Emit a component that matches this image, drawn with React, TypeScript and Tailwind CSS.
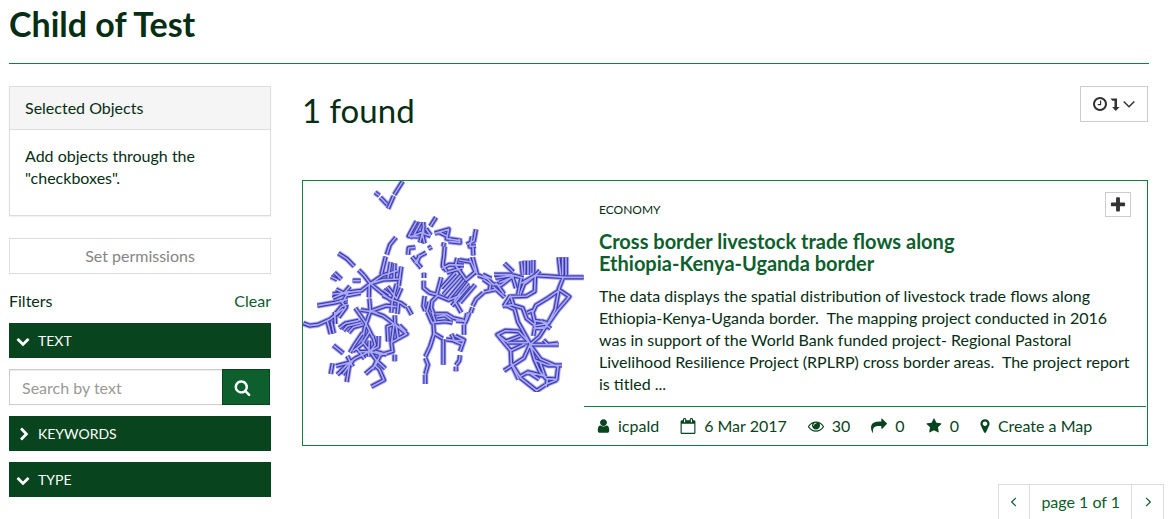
import React from "react";

const icons = {
  user: "M1536 1399q0 109-62.5 187t-150.5 78h-854q-88 0-150.5-78t-62.5-187q0-85 8.5-160.5t31.5-152 58.5-131 94-89 134.5-34.5q131 128 313 128t313-128q76 0 134.5 34.5t94 89 58.5 131 31.5 152 8.5 160.5zm-256-887q0 159-112.5 271.5t-271.5 112.5-271.5-112.5-112.5-271.5 112.5-271.5 271.5-112.5 271.5 112.5 112.5 271.5z",
  calendar:
    "M192 1664h1408v-1024h-1408v1024zm384-1216v-288q0-14-9-23t-23-9h-64q-14 0-23 9t-9 23v288q0 14 9 23t23 9h64q14 0 23-9t9-23zm768 0v-288q0-14-9-23t-23-9h-64q-14 0-23 9t-9 23v288q0 14 9 23t23 9h64q14 0 23-9t9-23zm384-64v1280q0 52-38 90t-90 38h-1408q-52 0-90-38t-38-90v-1280q0-52 38-90t90-38h128v-96q0-66 47-113t113-47h64q66 0 113 47t47 113v96h384v-96q0-66 47-113t113-47h64q66 0 113 47t47 113v96h128q52 0 90 38t38 90z",
  eye: "M1664 960q-152-236-381-353 61 104 61 225 0 185-131.5 316.5t-316.5 131.5-316.5-131.5-131.5-316.5q0-121 61-225-229 117-381 353 133 205 333.5 326.5t434.5 121.5 434.5-121.5 333.5-326.5zm-720-384q0-20-14-34t-34-14q-125 0-214.5 89.5t-89.5 214.5q0 20 14 34t34 14 34-14 14-34q0-86 61-147t147-61q20 0 34-14t14-34zm848 384q0 34-20 69-140 230-376.5 368.5t-499.5 138.5-499.5-139-376.5-368q-20-35-20-69t20-69q140-229 376.5-368t499.5-139 499.5 139 376.5 368q20 35 20 69z",
  share:
    "M1792 640q0 26-19 45l-512 512q-19 19-45 19t-45-19-19-45v-256h-224q-98 0-175.5 6t-154 21.5-133 42.5-105.5 69.5-80 101-48.5 138.5-17.5 181q0 55 5 123 0 6 2.5 23.5t2.5 26.5q0 15-8.5 25t-23.5 10q-16 0-28-17-7-9-13-22t-13.5-30-10.5-24q-127-285-127-451 0-199 53-333 162-403 875-403h224v-256q0-26 19-45t45-19 45 19l512 512q19 19 19 45z",
  star: "M1728 647q0 22-26 48l-363 354 86 500q1 7 1 20 0 21-10.5 35.5t-30.5 14.5q-19 0-40-12l-449-236-449 236q-22 12-40 12-21 0-31.5-14.5t-10.5-35.5q0-6 2-20l86-500-364-354q-25-27-25-48 0-37 56-46l502-73 225-455q19-41 49-41t49 41l225 455 502 73q56 9 56 46z",
  marker:
    "M1152 640q0-106-75-181t-181-75-181 75-75 181 75 181 181 75 181-75 75-181zm256 0q0 109-33 179l-364 774q-16 33-47.5 52t-67.5 19-67.5-19-46.5-52l-365-774q-33-70-33-179 0-212 150-362t362-150 362 150 150 362z",
  clock:
    "M1024 544v448q0 14-9 23t-23 9h-320q-14 0-23-9t-9-23v-64q0-14 9-23t23-9h224v-352q0-14 9-23t23-9h64q14 0 23 9t9 23zm416 352q0-148-73-273t-198-198-273-73-273 73-198 198-73 273 73 273 198 198 273 73 273-73 198-198 73-273zm224 0q0 209-103 385.5t-279.5 279.5-385.5 103-385.5-103-279.5-279.5-103-385.5 103-385.5 279.5-279.5 385.5-103 385.5 103 279.5 279.5 103 385.5z",
  plus: "M1600 736v192q0 40-28 68t-68 28h-416v416q0 40-28 68t-68 28h-192q-40 0-68-28t-28-68v-416h-416q-40 0-68-28t-28-68v-192q0-40 28-68t68-28h416v-416q0-40 28-68t68-28h192q40 0 68 28t28 68v416h416q40 0 68 28t28 68z",
  search:
    "M1216 832q0-185-131.5-316.5t-316.5-131.5-316.5 131.5-131.5 316.5 131.5 316.5 316.5 131.5 316.5-131.5 131.5-316.5zm512 832q0 52-38 90t-90 38q-54 0-90-38l-343-342q-179 124-399 124-143 0-273.5-55.5t-225-150-150-225-55.5-273.5 55.5-273.5 150-225 225-150 273.5-55.5 273.5 55.5 225 150 150 225 55.500 273.500q0 220-124 399l343 343q37 37 37 90z",
  chevron:
    "M1683 808l-742 741q-19 19-45 19t-45-19l-742-741q-19-19-19-45.5t19-45.5l166-165q19-19 45-19t45 19l531 531 531-531q19-19 45-19t45 19l166 165q19 19 19 45.5t-19 45.5z",
  angle:
    "M1395 736q0 13-10 23l-466 466q-10 10-23 10t-23-10l-466-466q-10-10-10-23t10-23l50-50q10-10 23-10t23 10l393 393 393-393q10-10 23-10t23 10l50 50q10 10 10 23z",
};

function Icon({
  name,
  className = "size-4",
  viewBox = "0 0 1792 1792",
}: {
  name: keyof typeof icons;
  className?: string;
  viewBox?: string;
}) {
  return (
    <svg viewBox={viewBox} fill="currentColor" aria-hidden="true" className={`shrink-0 ${className}`}>
      <path d={icons[name]} />
    </svg>
  );
}

const routes = [
  // north west spur
  "M308 10L283 50", "M281 54L264 92", "M225 43L238 53", "M241 58L262 80",
  // western cluster
  "M288 178L270 200L260 230", "M257 236L244 290", "M115 226L140 242L163 265", "M176 276L192 292",
  "M93 296L112 305", "M103 284L124 304", "M158 308H182", "M192 292L211 317L184 338L143 343",
  "M211 317L248 292L292 278", "M211 317L250 305L302 303", "M272 252L264 300", "M284 256L282 304", "M304 266L296 324",
  "M211 317L272 366", "M208 318L207 358", "M98 348L132 345L150 325", "M108 334L144 352L182 345", "M98 360L148 340",
  "M144 344L126 376", "M52 383L105 374L142 364", "M144 378L124 386L106 408", "M120 366L138 388L116 418",
  "M10 436L30 443L54 440L90 424L130 392", "M82 430L92 468", "M94 430L102 466", "M104 402L106 438",
  "M208 362L211 398", "M166 390L195 432L218 478", "M182 396L232 404", "M211 400L258 383L290 386", "M211 400L250 414L282 438",
  "M211 400L194 450L190 472", "M176 428L136 436L118 450", "M184 434L142 444L130 458", "M188 440L160 448L146 464",
  "M248 352L277 366L274 404", "M290 318L278 366L304 376L318 386", "M262 326L290 362L304 330", "M250 336L268 348",
  "M296 370L292 408", "M322 386L335 410", "M284 412L285 436", "M282 438L262 446L264 490", "M284 438L308 458L320 468L294 482L276 492",
  "M282 440L274 500", "M288 440L294 480", "M298 442L318 462", "M274 494L278 520L244 530L210 520",
  "M284 530L284 550", "M100 502L130 526", "M188 464L164 500L150 524", "M208 462L186 498L158 520", "M218 474L226 500L210 520L175 522",
  "M236 474L235 506L210 520L168 540L148 554", "M208 488L206 536", "M186 488L210 520L230 548L218 574", "M230 548L256 572",
  "M244 524L226 562L196 588", "M222 560L238 574L252 606L214 626", "M98 556L92 588", "M148 554L112 590", "M148 554L108 564",
  "M150 550L140 612", "M158 548L128 590", "M142 534L158 566", "M224 520L260 530", "M170 510L194 542",
  // central cluster
  "M408 118L391 145", "M350 130L326 174L356 176", "M370 132L371 168", "M362 134L342 170", "M330 178L362 164L392 174",
  "M404 166L446 154L440 182L480 188", "M372 142L360 194", "M366 164L374 196", "M378 152L392 172", "M416 162L444 176", "M446 190L480 194L478 182",
  "M346 208L326 210L324 230", "M385 212L395 206", "M378 224L360 234L344 256", "M336 236L364 270", "M358 232L350 258", "M372 284V300", "M371 308V330L388 344L410 350",
  "M528 154L522 188L500 200", "M516 176L510 206L528 204", "M519 208L520 232", "M434 206L432 232L428 262L440 280", "M432 194L430 206",
  "M424 272L448 260L492 262", "M472 240L466 262L492 298", "M478 246L512 252", "M518 238L532 290", "M508 240L526 282L498 306L470 266",
  "M440 284L486 270", "M466 284L424 330", "M482 292L430 350", "M492 306L446 362", "M504 314L462 368", "M526 320L480 374", "M508 322L456 384",
  "M424 298L410 350", "M412 352L446 366L484 350", "M414 352L396 370L394 390L402 410", "M374 354L370 384L376 398",
  "M382 402L396 434L436 430L458 434", "M388 372L380 402", "M406 408H440L460 420L492 428", "M410 416L434 412L454 426", "M396 402L406 430",
  "M462 366L484 404", "M468 428L498 430L508 404", "M502 406L494 438", "M492 440V470", "M400 436L402 466L428 482",
  "M402 468L390 506L376 536", "M376 540L384 560L376 588", "M376 590V618", "M430 484L430 560", "M438 484L464 488L492 488", "M454 468L464 490L490 500", "M466 474L492 486L480 520",
  "M480 532L478 548L468 562", "M468 566V580", "M550 344L528 364L518 384", "M518 388L512 404", "M552 342L588 334", "M534 292L562 302L582 322",
  "M548 290L574 302", "M550 304L572 320L568 338", "M576 318L602 322", "M582 328L614 358", "M588 314L612 348",
  // eastern cluster
  "M613 256L640 282", "M582 290H636", "M586 300L640 292L670 300", "M600 324L640 294", "M598 314L632 300", "M636 290L648 330",
  "M664 250L668 290", "M674 248V290", "M684 248V290", "M700 246V286", "M664 298L654 350", "M664 316L706 292L800 298H851", "M706 292L720 278", "M706 292L704 340L680 354L630 356",
  "M706 292L672 318L660 350", "M776 238L782 292", "M788 238V292", "M798 238V292", "M790 298L776 334L808 356L772 398L746 436L700 444",
  "M776 338L744 360L708 382L698 404L704 428L740 434", "M776 338L766 394L746 432L718 476L690 500", "M632 352L614 380L644 394L654 432L690 496",
  "M608 384L640 380L632 354", "M640 382L668 390L680 422L706 442L700 474", "M682 404L696 398L706 438", "M724 428L752 452", "M700 452L742 446",
  "M690 496L656 460L616 458L592 470L618 490L660 474", "M592 470L632 518L634 558", "M620 494L684 494", "M632 518L674 498", "M690 500L672 540L612 578",
  "M690 500H776", "M730 486L744 500L774 496", "M690 500L704 546L744 562H786", "M690 500L722 544L774 566L770 604L738 602", "M634 556L662 600L710 638L740 618L770 606",
  "M632 554L656 604", "M660 596L684 582L718 604", "M704 546L720 582L742 606L738 626", "M720 552L736 600", "M684 582L740 596",
];

function RouteMap() {
  return (
    <svg viewBox="9 9 843 633" role="img" aria-label="Livestock trade routes" className="block w-full">
      <g fill="none" strokeLinejoin="round">
        <path d={routes.join("")} stroke="#d6d6fa" strokeWidth="20" />
        <path d={routes.join("")} stroke="#8886de" strokeWidth="16" />
        <path d={routes.join("")} stroke="#3a37ac" strokeWidth="11" />
        <path d={routes.join("")} stroke="#a9a9f7" strokeWidth="5" />
      </g>
    </svg>
  );
}

function FilterBar({ label, open }: { label: string; open: boolean }) {
  return (
    <button
      type="button"
      aria-expanded={open}
      className="flex h-[35px] w-full items-center gap-2 bg-[#08441e] px-[7px] text-left text-[14px] text-white"
    >
      <Icon name="chevron" className={open ? "size-3.5" : "size-3.5 -rotate-90"} />
      {label}
    </button>
  );
}

function Stat({ icon, children, href }: { icon: React.ReactNode; children: React.ReactNode; href?: string }) {
  return (
    <li>
      {href ? (
        <a href={href} className="flex items-center gap-2">{icon}{children}</a>
      ) : (
        <span className="flex items-center gap-2">{icon}{children}</span>
      )}
    </li>
  );
}

export default function App() {
  return (
    <div className="bg-white pr-[19px] pl-[9px] font-['Lato',sans-serif] text-[16px] leading-[22px] text-[#052e14]">
      <header className="border-b border-[#128040] pt-1 pb-[19px]">
        <h1 className="text-[34px] leading-[40px] font-bold">Child of Test</h1>
      </header>

      <div className="flex items-start gap-[31px] pt-[22px] pr-px">
        <aside className="w-[262px] shrink-0">
          <section className="border border-[#dddddd] shadow-[0_1px_1px_rgba(0,0,0,0.05)]">
            <h2 className="border-b border-[#dddddd] bg-[#f5f5f5] px-[15px] py-[10px]">Selected Objects</h2>
            <p className="px-[15px] pt-[15px] pb-[26px]">Add objects through the "checkboxes".</p>
          </section>
          <button type="button" disabled className="mt-[22px] h-9 w-full border border-[#dddddd] text-[#858585]">
            Set permissions
          </button>
          <div className="mt-4 mb-[11px] flex justify-between">
            <h2>Filters</h2>
            <a href="#clear" className="text-[#0c5c2b]">Clear</a>
          </div>
          <div className="flex flex-col gap-[11px]">
            <FilterBar label="TEXT" open />
            <form className="flex h-9 pr-px" onSubmit={(e) => e.preventDefault()}>
              <input
                type="text"
                aria-label="Search by text"
                placeholder="Search by text"
                className="min-w-0 flex-1 border border-r-0 border-[#cccccc] px-3 pt-0.5 shadow-[inset_0_1px_1px_rgba(0,0,0,0.075)] outline-none placeholder:text-[#999999]"
              />
              <button
                type="submit"
                aria-label="Search"
                className="flex w-12 items-center border border-[#08441e] bg-[#0d602e] pl-[11px] text-white"
              >
                <Icon name="search" className="size-[17px]" />
              </button>
            </form>
            <FilterBar label="KEYWORDS" open={false} />
            <FilterBar label="TYPE" open />
          </div>
        </aside>

        <main className="min-w-0 flex-1">
          <div className="flex items-start justify-between">
            <h2 className="pt-1 text-[33px] leading-[40px]">1 found</h2>
            <button
              type="button"
              aria-label="Sort by date"
              className="flex h-9 w-[68px] items-center justify-center gap-[3px] border border-[#cccccc] text-[#333333]"
            >
              <Icon name="clock" viewBox="128 128 1536 1536" className="size-3.5" />
              <svg viewBox="0 0 10 13" className="h-[13px] w-2.5" fill="currentColor" aria-hidden="true">
                <path d="M0.500 0.500H7V9h2.500L5.800 13 2.100 9H4.500V2.800H2.300z" />
              </svg>
              <svg viewBox="0 0 12 12" className="size-3" fill="none" stroke="currentColor" strokeWidth="1.5" aria-hidden="true">
                <path d="M0.700 3.500L6 8.800l5.300-5.300" />
              </svg>
            </button>
          </div>

          <article className="mt-[50px] flex border border-[#128040] pr-px">
            <div className="w-1/3 shrink-0">
              <RouteMap />
            </div>
            <div className="flex min-w-0 flex-1 flex-col">
              <div className="flex-1 px-[15px] pb-[11px]">
                <div className="flex items-start justify-between pt-[11px]">
                  <p className="pt-[7px] text-[12px]">ECONOMY</p>
                  <button
                    type="button"
                    aria-label="Add to selection"
                    className="flex h-[25px] w-[26px] items-center justify-center border border-[#cccccc] text-[#333333]"
                  >
                    <Icon name="plus" className="size-[18px]" />
                  </button>
                </div>
                <h3 className="mt-[9px] max-w-[400px] text-[20px] leading-[22px] font-bold text-[#0d602e]">
                  <a href="#dataset">Cross border livestock trade flows along Ethiopia-Kenya-Uganda border</a>
                </h3>
                <p className="mt-[11px] whitespace-pre-wrap">
                  {"The data displays the spatial distribution of livestock trade flows along Ethiopia-Kenya-Uganda border.  The mapping project conducted in 2016 was in support of the World Bank funded project- Regional Pastoral Livelihood Resilience Project (RPLRP) cross border areas.  The project report is titled ..."}
                </p>
              </div>
              <ul className="flex gap-[21px] border-t border-[#128040] px-[13px] py-2 text-[#08441e]">
                <Stat href="#icpald" icon={<Icon name="user" viewBox="192 0 1408 1792" className="h-4 w-[13px]" />}>
                  icpald
                </Stat>
                <Stat icon={<Icon name="calendar" />}>6 Mar 2017</Stat>
                <Stat icon={<Icon name="eye" />}>30</Stat>
                <Stat icon={<Icon name="share" />}>0</Stat>
                <Stat icon={<Icon name="star" />}>0</Stat>
                <Stat href="#map" icon={<Icon name="marker" viewBox="336 0 1120 1792" className="h-4 w-2.5" />}>
                  Create a Map
                </Stat>
              </ul>
            </div>
          </article>

          <nav aria-label="Pagination" className="mt-[38px] -mr-4 flex justify-end text-[#0c5c2b]">
            <div className="flex h-[35px] divide-x divide-[#dddddd] border border-b-0 border-[#dddddd]">
              <a href="#prev" aria-label="Previous page" className="flex w-[31px] items-center justify-center">
                <Icon name="angle" className="size-4 rotate-90" />
              </a>
              <span className="flex items-center px-[11px]">page 1 of 1</span>
              <a href="#next" aria-label="Next page" className="flex w-[31px] items-center justify-center">
                <Icon name="angle" className="size-4 -rotate-90" />
              </a>
            </div>
          </nav>
        </main>
      </div>
    </div>
  );
}
